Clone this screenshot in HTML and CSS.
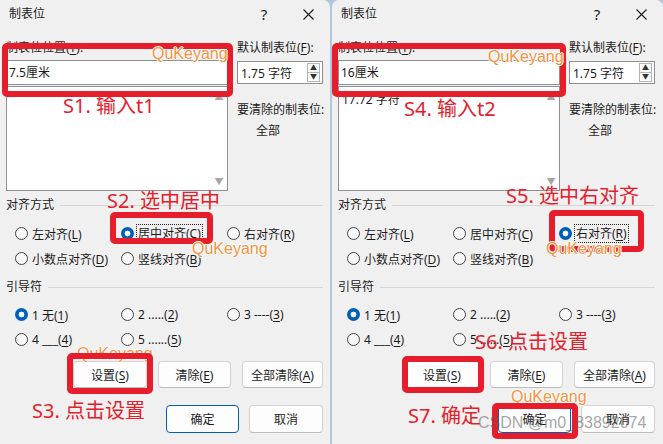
FILE: index.html
```html
<!DOCTYPE html>
<html lang="zh-CN">
<head>
    <meta charset="UTF-8">
    <meta name="viewport" content="width=device-width, initial-scale=1.0">
    <title>制表位</title>
    <link rel="stylesheet" href="styles.css">
</head>
<body>
<div class="screen">

    <!-- step 1: first tab stop -->
    <div class="dialog">
        <div class="titlebar">
            <span class="title">制表位</span>
            <span class="help">?</span>
            <svg class="close" width="11" height="11" viewBox="0 0 11 11"><path d="M0.5 0.5 L10.5 10.5 M10.5 0.5 L0.5 10.5" stroke="#1b1b1b" stroke-width="1.1" fill="none"/></svg>
        </div>
        <div class="content">
            <div class="top">
                <div class="tabcol">
                    <div class="lbl">制表位位置(<u>T</u>):</div>
                    <div class="pos">7.5厘米</div>
                    <div class="list">
                        <div class="items"></div>
                        <div class="scroll"><span>▲</span><span>▼</span></div>
                    </div>
                </div>
                <div class="defcol">
                    <div class="lbl">默认制表位(<u>F</u>):</div>
                    <div class="spin">
                        <span class="val">1.75 字符</span>
                        <div class="arrows"><span>▲</span><span>▼</span></div>
                    </div>
                    <div class="lbl clear">要清除的制表位:</div>
                    <div class="lbl all">全部</div>
                </div>
            </div>

            <div class="group">对齐方式</div>
            <div class="opts">
                <div class="opt"><span class="radio"></span><span>左对齐(<u>L</u>)</span></div>
                <div class="opt"><span class="radio on"></span><span class="focus">居中对齐(<u>C</u>)</span></div>
                <div class="opt"><span class="radio"></span><span>右对齐(<u>R</u>)</span></div>
                <div class="opt"><span class="radio"></span><span>小数点对齐(<u>D</u>)</span></div>
                <div class="opt"><span class="radio"></span><span>竖线对齐(<u>B</u>)</span></div>
            </div>

            <div class="group lead">引导符</div>
            <div class="opts leaders">
                <div class="opt"><span class="radio on"></span><span>1 无(<u>1</u>)</span></div>
                <div class="opt"><span class="radio"></span><span>2 .....(<u>2</u>)</span></div>
                <div class="opt"><span class="radio"></span><span>3 ----(<u>3</u>)</span></div>
                <div class="opt"><span class="radio"></span><span>4 ___(<u>4</u>)</span></div>
                <div class="opt"><span class="radio"></span><span>5 ......(<u>5</u>)</span></div>
            </div>

            <div class="btns">
                <button class="btn set">设置(<u>S</u>)</button>
                <button class="btn">清除(<u>E</u>)</button>
                <button class="btn wide">全部清除(<u>A</u>)</button>
            </div>
            <div class="actions">
                <button class="btn ok">确定</button>
                <button class="btn cancel">取消</button>
            </div>
        </div>

        <div class="mark m-pos1"></div>
        <div class="wm w-pos1">QuKeyang</div>
        <div class="note n-s1">S1. 输入t1</div>
        <div class="note n-s2">S2. 选中居中</div>
        <div class="mark m-center"></div>
        <div class="wm w-center">QuKeyang</div>
        <div class="wm w-set1">QuKeyang</div>
        <div class="mark m-set1"></div>
        <div class="note n-s3">S3. 点击设置</div>
    </div>

    <!-- step 2: second tab stop -->
    <div class="dialog second">
        <div class="titlebar">
            <span class="title">制表位</span>
            <span class="help">?</span>
            <svg class="close" width="11" height="11" viewBox="0 0 11 11"><path d="M0.5 0.5 L10.5 10.5 M10.5 0.5 L0.5 10.5" stroke="#1b1b1b" stroke-width="1.1" fill="none"/></svg>
        </div>
        <div class="content">
            <div class="top">
                <div class="tabcol">
                    <div class="lbl">制表位位置(<u>T</u>):</div>
                    <div class="pos">16厘米</div>
                    <div class="list">
                        <div class="items"><div class="item">17.72 字符</div></div>
                        <div class="scroll"><span>▲</span><span>▼</span></div>
                    </div>
                </div>
                <div class="defcol">
                    <div class="lbl">默认制表位(<u>F</u>):</div>
                    <div class="spin">
                        <span class="val">1.75 字符</span>
                        <div class="arrows"><span>▲</span><span>▼</span></div>
                    </div>
                    <div class="lbl clear">要清除的制表位:</div>
                    <div class="lbl all">全部</div>
                </div>
            </div>

            <div class="group">对齐方式</div>
            <div class="opts">
                <div class="opt"><span class="radio"></span><span>左对齐(<u>L</u>)</span></div>
                <div class="opt"><span class="radio"></span><span>居中对齐(<u>C</u>)</span></div>
                <div class="opt"><span class="radio on"></span><span class="focus">右对齐(<u>R</u>)</span></div>
                <div class="opt"><span class="radio"></span><span>小数点对齐(<u>D</u>)</span></div>
                <div class="opt"><span class="radio"></span><span>竖线对齐(<u>B</u>)</span></div>
            </div>

            <div class="group lead">引导符</div>
            <div class="opts leaders">
                <div class="opt"><span class="radio on"></span><span>1 无(<u>1</u>)</span></div>
                <div class="opt"><span class="radio"></span><span>2 .....(<u>2</u>)</span></div>
                <div class="opt"><span class="radio"></span><span>3 ----(<u>3</u>)</span></div>
                <div class="opt"><span class="radio"></span><span>4 ___(<u>4</u>)</span></div>
                <div class="opt"><span class="radio"></span><span>5 ......(<u>5</u>)</span></div>
            </div>

            <div class="btns">
                <button class="btn set">设置(<u>S</u>)</button>
                <button class="btn">清除(<u>E</u>)</button>
                <button class="btn wide">全部清除(<u>A</u>)</button>
            </div>
            <div class="actions">
                <button class="btn ok">确定</button>
                <button class="btn cancel">取消</button>
            </div>
        </div>

        <div class="mark m-pos2"></div>
        <div class="wm w-pos2">QuKeyang</div>
        <div class="note n-s4">S4. 输入t2</div>
        <div class="note n-s5">S5. 选中右对齐</div>
        <div class="mark m-right"></div>
        <div class="wm w-right">QuKeyang</div>
        <div class="note n-s6">S6. 点击设置</div>
        <div class="mark m-set2"></div>
        <div class="wm w-set2">QuKeyang</div>
        <div class="note n-s7">S7. 确定</div>
        <div class="mark m-ok"></div>
        <div class="csdn">CSDN @m0_83892074</div>
    </div>

</div>
</body>
</html>
```

FILE: styles.css
```css
* {
    box-sizing: border-box;
}
body {
    margin: 0;
    width: 663px;
    height: 444px;
    overflow: hidden;
    background: #b4c6df;
    font-family: "Noto Sans", "Noto Sans CJK SC", sans-serif;
    font-size: 12px;
    color: #1b1b1b;
}
u {
    text-decoration-thickness: 1px;
    text-underline-offset: 2px;
}
.screen {
    display: flex;
    height: 444px;
}
.dialog {
    position: relative;
    width: 330px;
    height: 444px;
    background: #f0f0f0;
    border-top-right-radius: 7px;
    overflow: hidden;
}
.second {
    width: 331px;
    margin-left: 2px;
    border-top-left-radius: 7px;
}

/* title bar */
.titlebar {
    display: flex;
    align-items: center;
    height: 28px;
    padding-left: 9px;
    line-height: 16px;
}
.title {
    flex: 1;
}
.help {
    width: 14px;
    text-align: center;
    font-size: 15px;
    margin-right: 32px;
}
.close {
    margin-right: 16px;
}

.content {
    width: 323px;
    padding-left: 6px;
}

/* tab position + default column */
.top {
    display: flex;
    gap: 9px;
    margin-top: 12px;
}
.tabcol {
    width: 222px;
}
.defcol {
    width: 86px;
}
.lbl {
    height: 16px;
    line-height: 16px;
    white-space: nowrap;
}
.pos {
    margin-top: 4px;
    height: 25px;
    line-height: 23px;
    padding-left: 2px;
    background: #fff;
    border: 1px solid #8f8f8f;
}
.list {
    display: flex;
    height: 105px;
    margin-top: 1px;
    background: #fff;
    border: 1px solid #8f8f8f;
}
.items {
    flex: 1;
}
.item {
    padding: 5px 0 0 3px;
    line-height: 16px;
}
.scroll {
    width: 16px;
    display: flex;
    flex-direction: column;
    justify-content: space-between;
    align-items: center;
    padding: 5px 0 3px;
    color: #a6a6a6;
    font-size: 9px;
    line-height: 10px;
}
.spin {
    display: flex;
    align-items: center;
    margin-top: 5px;
    height: 23px;
    background: #fff;
    border: 1px solid #8f8f8f;
}
.val {
    flex: 1;
    padding-left: 3px;
}
.arrows {
    display: flex;
    flex-direction: column;
    width: 13px;
    height: 19px;
    margin-right: 2px;
    border: 1px solid #b5b5b5;
    font-size: 7px;
    line-height: 8px;
    color: #333;
}
.arrows span {
    flex: 1;
    text-align: center;
}
.arrows span + span {
    border-top: 1px solid #b5b5b5;
}
.clear {
    margin-top: 18px;
}
.all {
    margin-top: 5px;
    padding-left: 19px;
}

/* option groups */
.group {
    display: flex;
    align-items: center;
    gap: 6px;
    height: 16px;
    line-height: 16px;
    margin-top: 6px;
}
.group::after {
    content: "";
    flex: 1;
    border-top: 1px solid #d6d6d6;
}
.lead {
    margin-top: 8px;
}
.opts {
    display: grid;
    grid-template-columns: 106px 106px 106px;
    grid-auto-rows: 25px;
    margin: 8px 0 0 9px;
}
.leaders {
    margin-top: 7px;
}
.opt {
    display: flex;
    align-items: center;
    gap: 4px;
    white-space: nowrap;
}
.radio {
    width: 13px;
    height: 13px;
    border: 1px solid #444;
    border-radius: 50%;
    background: #f8f8f8;
}
.radio.on {
    border: 0;
    background: radial-gradient(circle, #fff 0 2.6px, #005fb8 3.2px);
}
.focus {
    outline: 1px dotted #222;
    outline-offset: 1px;
    line-height: 15px;
}

/* buttons */
.btns {
    display: flex;
    justify-content: flex-end;
    gap: 11px;
    margin-top: 9px;
}
.actions {
    display: flex;
    justify-content: flex-end;
    gap: 10px;
    margin-top: 17px;
}
.btn {
    width: 73px;
    height: 27px;
    padding: 0;
    font-family: inherit;
    font-size: 12px;
    color: #1b1b1b;
    background: #fdfdfd;
    border: 1px solid #d3d3d3;
    border-bottom-color: #bcbcbc;
    border-radius: 4px;
}
.set {
    width: 74px;
}
.wide {
    width: 81px;
}
.ok,
.cancel {
    height: 28px;
}
.cancel {
    width: 74px;
}
.ok {
    border-color: #005fb8;
}

/* annotations */
.mark {
    position: absolute;
    border: 6px solid #e61e2b;
    border-radius: 5px;
}
.note {
    position: absolute;
    color: #e3202c;
    font-size: 20px;
    line-height: 24px;
    white-space: nowrap;
}
.wm {
    position: absolute;
    color: #f39240;
    font-family: "Liberation Sans", Arial, sans-serif;
    font-size: 16px;
    line-height: 18px;
    text-shadow: 1px 0 #fff, -1px 0 #fff, 0 1px #fff, 0 -1px #fff;
}
.csdn {
    position: absolute;
    left: 146px;
    top: 414px;
    font-family: "Liberation Sans", Arial, sans-serif;
    font-size: 16px;
    color: rgba(90, 90, 90, 0.55);
    white-space: nowrap;
}

.m-pos1 { left: 2px; top: 43px; width: 231px; height: 54px; }
.w-pos1 { left: 152px; top: 45px; }
.n-s1 { left: 63px; top: 94px; }
.n-s2 { left: 107px; top: 189px; }
.m-center { left: 110px; top: 212px; width: 103px; height: 32px; }
.w-center { left: 192px; top: 240px; }
.w-set1 { left: 77px; top: 345px; }
.m-set1 { left: 67px; top: 353px; width: 86px; height: 41px; }
.n-s3 { left: 32px; top: 399px; }

.m-pos2 { left: 0; top: 43px; width: 234px; height: 54px; }
.w-pos2 { left: 156px; top: 48px; }
.n-s4 { left: 72px; top: 97px; }
.n-s5 { left: 174px; top: 184px; }
.m-right { left: 217px; top: 210px; width: 95px; height: 42px; }
.w-right { left: 214px; top: 240px; }
.n-s6 { left: 143px; top: 330px; }
.m-set2 { left: 70px; top: 356px; width: 82px; height: 37px; }
.w-set2 { left: 179px; top: 388px; }
.n-s7 { left: 76px; top: 404px; }
.m-ok { left: 160px; top: 403px; width: 86px; height: 36px; }
```
